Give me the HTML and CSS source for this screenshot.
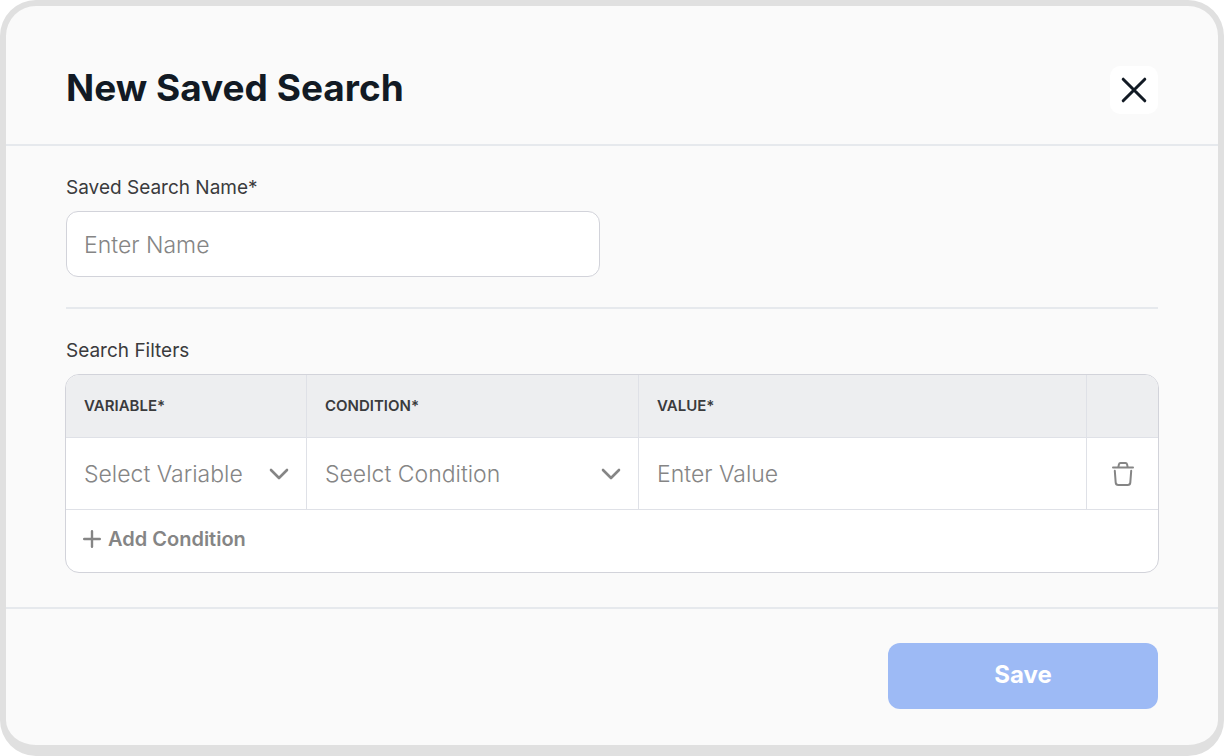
FILE: index.html
```html
<!DOCTYPE html>
<html lang="en">
<head>
    <meta charset="UTF-8">
    <meta name="viewport" content="width=device-width, initial-scale=1.0">
    <title>New Saved Search</title>
    <link rel="stylesheet" href="styles.css">
</head>
<body>
    <form class="modal">
        <header class="modal-header">
            <h1>New Saved Search</h1>
            <button type="button" class="close-btn" aria-label="Close">
                <svg width="48" height="48" viewBox="0 0 48 48" fill="none" stroke="#121a24" stroke-width="3" stroke-linecap="round">
                    <path d="M13.2 13.2 L34.8 34.8 M34.8 13.2 L13.2 34.8"/>
                </svg>
            </button>
        </header>

        <div class="modal-body">
            <div class="name-field">
                <label class="field-label" for="name">Saved Search Name*</label>
                <input type="text" id="name" class="name-input" placeholder="Enter Name">
            </div>

            <h2 class="field-label">Search Filters</h2>
            <div class="filters">
                <table>
                    <colgroup>
                        <col class="col-variable">
                        <col class="col-condition">
                        <col class="col-value">
                        <col class="col-action">
                    </colgroup>
                    <thead>
                        <tr>
                            <th id="h-variable">VARIABLE*</th>
                            <th id="h-condition">CONDITION*</th>
                            <th id="h-value">VALUE*</th>
                            <td></td>
                        </tr>
                    </thead>
                    <tbody>
                        <tr>
                            <td>
                                <div class="select-wrap">
                                    <select aria-labelledby="h-variable">
                                        <option>Select Variable</option>
                                    </select>
                                    <svg class="chevron" width="20" height="12" viewBox="0 0 20 12" fill="none" stroke="#858585" stroke-width="2.6" stroke-linecap="round" stroke-linejoin="round">
                                        <path d="M2 2 L10 10 L18 2"/>
                                    </svg>
                                </div>
                            </td>
                            <td>
                                <div class="select-wrap">
                                    <select aria-labelledby="h-condition">
                                        <option>Seelct Condition</option>
                                    </select>
                                    <svg class="chevron" width="20" height="12" viewBox="0 0 20 12" fill="none" stroke="#858585" stroke-width="2.6" stroke-linecap="round" stroke-linejoin="round">
                                        <path d="M2 2 L10 10 L18 2"/>
                                    </svg>
                                </div>
                            </td>
                            <td>
                                <input type="text" class="value-input" placeholder="Enter Value" aria-labelledby="h-value">
                            </td>
                            <td>
                                <button type="button" class="delete-btn" aria-label="Delete condition">
                                    <svg width="24" height="26" viewBox="0 0 24 26" fill="none" stroke="#858585" stroke-width="2" stroke-linecap="round" stroke-linejoin="round">
                                        <path d="M2 6.4 H22"/>
                                        <path d="M7.4 6 L7.9 3.4 Q8.2 2 9.6 2 H14.4 Q15.8 2 16.1 3.4 L16.6 6"/>
                                        <path d="M3.8 9.8 L4.7 21.6 Q4.9 24 7.3 24 H16.7 Q19.1 24 19.3 21.6 L20.2 9.8"/>
                                    </svg>
                                </button>
                            </td>
                        </tr>
                        <tr>
                            <td colspan="4">
                                <button type="button" class="add-btn">
                                    <svg width="18" height="18" viewBox="0 0 18 18" fill="none" stroke="#858585" stroke-width="2.4" stroke-linecap="round">
                                        <path d="M9 1.2 V16.8 M1.2 9 H16.8"/>
                                    </svg>
                                    Add Condition
                                </button>
                            </td>
                        </tr>
                    </tbody>
                </table>
            </div>
        </div>

        <footer class="modal-footer">
            <button type="submit" class="save-btn">Save</button>
        </footer>
    </form>
</body>
</html>
```

FILE: styles.css
```css
* {
    box-sizing: border-box;
}
body {
    margin: 0;
    background: #fff;
    font-family: Inter, sans-serif;
    color: #3a3b3d;
}
button,
input,
select {
    font-family: inherit;
}
button {
    border: none;
    padding: 0;
    cursor: pointer;
}
.modal {
    background: #fafafa;
    border: 6px solid #e0e0e0;
    border-bottom-width: 11px;
    border-radius: 36px;
}
.modal-header {
    display: flex;
    justify-content: space-between;
    align-items: flex-start;
    padding: 60px 60px 30px;
    border-bottom: 2px solid #e6e9ed;
}
h1 {
    margin: 0;
    font-size: 37px;
    line-height: 44px;
    font-weight: 700;
    color: #121a24;
}
.close-btn {
    width: 48px;
    height: 48px;
    background: #fff;
    border-radius: 10px;
}
.close-btn svg {
    display: block;
}
.modal-body {
    padding: 30px 60px 34px;
}
.field-label {
    display: block;
    margin: 0 0 11px;
    font-size: 19px;
    line-height: 24px;
    font-weight: 400;
}
.name-field {
    padding-bottom: 30px;
    margin-bottom: 30px;
    border-bottom: 2px solid #e6e9ed;
}
.name-input {
    display: block;
    width: 50%;
    max-width: 534px;
    height: 66px;
    padding: 2px 17px 0;
    background: #fff;
    border: 1px solid #d2d3da;
    border-radius: 12px;
    font-size: 23px;
    font-weight: 300;
    color: #858585;
}
::placeholder {
    color: #858585;
    opacity: 1;
}
.filters {
    margin: 0 -1px;
    background: #fff;
    border: 1px solid #d2d3da;
    border-radius: 14px;
    overflow: hidden;
}
table {
    width: 100%;
    table-layout: fixed;
    border-collapse: separate;
    border-spacing: 0;
}
.col-variable {
    width: 241px;
}
.col-condition {
    width: 332px;
}
.col-action {
    width: 71px;
}
th,
td {
    padding: 0;
    border-right: 1px solid #dfe1e7;
    border-bottom: 1px solid #dfe1e7;
}
th:last-child,
td:last-child {
    border-right: none;
}
tbody tr:last-child td {
    border-bottom: none;
}
thead th,
thead td {
    height: 63px;
    padding: 0 18px 2px;
    background: #edeef0;
    font-size: 15px;
    font-weight: 600;
    text-align: left;
}
.select-wrap {
    position: relative;
}
select,
.value-input {
    display: block;
    width: 100%;
    height: 71px;
    padding: 0 18px;
    appearance: none;
    background: transparent;
    border: none;
    font-size: 23px;
    font-weight: 300;
    color: #858585;
}
.chevron {
    position: absolute;
    top: 50%;
    right: 17px;
    margin-top: -6px;
    pointer-events: none;
}
.delete-btn {
    display: flex;
    align-items: center;
    justify-content: center;
    width: 100%;
    height: 71px;
    background: none;
}
.add-btn {
    display: flex;
    align-items: center;
    gap: 7px;
    height: 62px;
    padding: 0 17px 4px;
    background: none;
    font-size: 20px;
    font-weight: 600;
    color: #858585;
}
.modal-footer {
    display: flex;
    justify-content: flex-end;
    padding: 34px 60px 36px;
    border-top: 2px solid #e6e9ed;
}
.save-btn {
    width: 270px;
    height: 66px;
    padding-bottom: 4px;
    background: #9dbaf5;
    border-radius: 12px;
    font-size: 24px;
    font-weight: 700;
    color: #fff;
}
```
